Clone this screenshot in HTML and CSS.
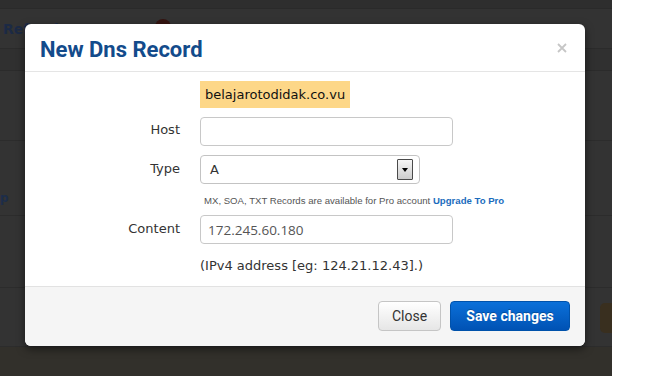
FILE: index.html
```html
<!DOCTYPE html>
<html lang="en">
  <head>
    <meta charset="UTF-8" />
    <meta name="viewport" content="width=device-width, initial-scale=1.0" />
    <title>New Dns Record</title>
    <link rel="stylesheet" href="styles.css">
  </head>
  <body>
    <div class="screen">
      <div class="page">
        <div class="topbar"></div>
        <div class="toolbar">
          <a class="ref-link">Refresh</a>
          <span class="badge"></span>
        </div>
        <div class="thead"></div>
        <div class="trow row-a"></div>
        <div class="trow row-b"><span class="cut-link">p</span></div>
        <div class="trow row-c"></div>
        <div class="trow row-d"><span class="dim-btn"></span></div>
        <div class="page-bottom"></div>
      </div>

      <div class="modal">
        <div class="modal-header">
          <h3 class="modal-title">New Dns Record</h3>
          <svg class="close-x" width="10" height="10" viewBox="0 0 10 10">
            <path d="M1 1 L9 9 M9 1 L1 9" stroke="#c6c6c6" stroke-width="1.8" fill="none" />
          </svg>
        </div>

        <div class="modal-body">
          <div class="form-row domain-row">
            <span></span>
            <div><span class="domain">belajarotodidak.co.vu</span></div>
          </div>

          <div class="form-row host-row">
            <label class="form-label">Host</label>
            <input class="text-input" type="text" value="" />
          </div>

          <div class="form-row">
            <label class="form-label">Type</label>
            <div class="select-box">
              <span class="select-value">A</span>
              <span class="select-arrow"><i></i></span>
            </div>
          </div>

          <div class="form-row help-row">
            <span></span>
            <div class="help-text">MX, SOA, TXT Records are available for Pro account <a class="upgrade">Upgrade To Pro</a></div>
          </div>

          <div class="form-row">
            <label class="form-label">Content</label>
            <input class="text-input" type="text" value="172.245.60.180" />
          </div>

          <div class="form-row hint-row">
            <span></span>
            <div class="hint">(IPv4 address [eg: 124.21.12.43].)</div>
          </div>
        </div>

        <div class="modal-footer">
          <button class="btn btn-close">Close</button>
          <button class="btn btn-save">Save changes</button>
        </div>
      </div>
    </div>
    <div class="outside"></div>
  </body>
</html>
```

FILE: styles.css
```css
body {
  margin: 0;
  display: flex;
  height: 376px;
  overflow: hidden;
  background-color: #fff;
  font-family: "DejaVu Sans", Verdana, sans-serif;
  color: #333;
}
.screen {
  position: relative;
  width: 612px;
  height: 376px;
  overflow: hidden;
  background-color: #333;
}
.outside {
  flex: 1;
  background-color: #fff;
}

/* dimmed page behind the dialog */
.topbar {
  height: 8px;
  background-color: #2e2e2e;
  border-bottom: 1px solid #2a2a2a;
}
.toolbar {
  height: 39px;
  display: flex;
  align-items: center;
  border-bottom: 1px solid #2b2b2b;
}
.ref-link {
  margin-left: 3px;
  font-weight: bold;
  font-size: 14px;
  color: #1c2a45;
}
.badge {
  width: 16px;
  height: 16px;
  margin-left: 91px;
  margin-top: -4px;
  border-radius: 50%;
  background-color: #351411;
}
.thead {
  height: 21px;
  background-color: #303030;
  border-bottom: 1px solid #2b2b2b;
}
.trow {
  border-bottom: 1px solid #2c2c2c;
}
.row-a {
  height: 69px;
}
.row-b {
  height: 74px;
  display: flex;
  align-items: center;
}
.cut-link {
  margin-left: 0;
  margin-top: 40px;
  font-weight: bold;
  font-size: 12px;
  color: #1c2d4a;
}
.row-c {
  height: 71px;
}
.row-d {
  height: 58px;
  display: flex;
  justify-content: flex-end;
  align-items: flex-start;
}
.dim-btn {
  width: 30px;
  height: 30px;
  margin-top: 15px;
  margin-right: -18px;
  border-radius: 5px;
  background-color: #392f1f;
}
.page-bottom {
  height: 40px;
  background-color: #32302b;
}

/* dialog */
.modal {
  position: absolute;
  left: 25px;
  top: 24px;
  width: 560px;
  background-color: #fff;
  border-radius: 6px;
  box-shadow: 0 3px 9px rgba(0, 0, 0, 0.5);
  overflow: hidden;
}
.modal-header {
  height: 34px;
  padding: 13px 18px 0 15px;
  display: flex;
  justify-content: space-between;
  align-items: flex-start;
  border-bottom: 1px solid #e5e5e5;
}
.modal-title {
  margin: 0;
  font-family: Roboto, "Open Sans", sans-serif;
  font-weight: 700;
  font-size: 22px;
  line-height: 26px;
  color: #134b8b;
}
.close-x {
  margin-top: 6px;
}
.modal-body {
  padding: 9px 15px 11px 15px;
}
.form-row {
  display: grid;
  grid-template-columns: 140px auto;
  column-gap: 20px;
  align-items: center;
  margin-bottom: 9px;
}
.domain {
  display: inline-block;
  height: 27px;
  line-height: 27px;
  padding: 0 5px;
  font-size: 13px;
  color: #111;
  background-color: #fdd788;
}
.form-label {
  text-align: right;
  font-size: 13px;
  color: #333;
  margin-bottom: 3px;
}
.host-row .form-label {
  margin-bottom: 4px;
}
.text-input {
  box-sizing: border-box;
  width: 253px;
  height: 29px;
  padding: 0 7px;
  border: 1px solid #c8c8c8;
  border-radius: 4px;
  font-family: "Open Sans", sans-serif;
  font-size: 13.5px;
  color: #555;
  outline: none;
}
.select-box {
  box-sizing: border-box;
  width: 220px;
  height: 29px;
  display: flex;
  align-items: center;
  padding-left: 9px;
  border: 1px solid #c3c3c3;
  border-radius: 4px;
  font-size: 13px;
  color: #333;
}
.select-arrow {
  box-sizing: border-box;
  margin-left: auto;
  margin-right: 6px;
  width: 16px;
  height: 21px;
  display: flex;
  align-items: center;
  justify-content: center;
  border: 1px solid #4a4a4a;
  border-radius: 1px;
  background: linear-gradient(#f6f6f6, #cdcdcd);
}
.select-arrow i {
  width: 0;
  height: 0;
  border-left: 3.5px solid transparent;
  border-right: 3.5px solid transparent;
  border-top: 4px solid #000;
}
.help-row {
  margin-top: 10px;
  margin-bottom: 7px;
}
.help-text {
  padding-left: 4px;
  font-family: "Liberation Sans", Arial, sans-serif;
  font-size: 9.6px;
  line-height: 14px;
  color: #555;
  white-space: nowrap;
}
.upgrade {
  font-weight: bold;
  color: #1b6cbd;
}
.hint-row {
  margin-top: 13px;
  margin-bottom: 0;
}
.hint {
  font-size: 13px;
  line-height: 18px;
  color: #333;
}
.modal-footer {
  display: flex;
  justify-content: flex-end;
  gap: 9px;
  padding: 14px 15px 15px 15px;
  background-color: #f5f5f5;
  border-top: 1px solid #e2e2e2;
}
.btn {
  height: 30px;
  border-radius: 4px;
  font-family: Roboto, "Open Sans", sans-serif;
  font-size: 14px;
  cursor: pointer;
}
.btn-close {
  width: 63px;
  border: 1px solid #c5c5c5;
  background: linear-gradient(#ffffff, #e6e6e6);
  color: #333;
}
.btn-save {
  width: 120px;
  border: 1px solid #0052ab;
  background: linear-gradient(#0b70d9, #0052b4);
  color: #fff;
  font-weight: 700;
  text-shadow: 0 -1px 0 rgba(0, 0, 0, 0.25);
}
```
